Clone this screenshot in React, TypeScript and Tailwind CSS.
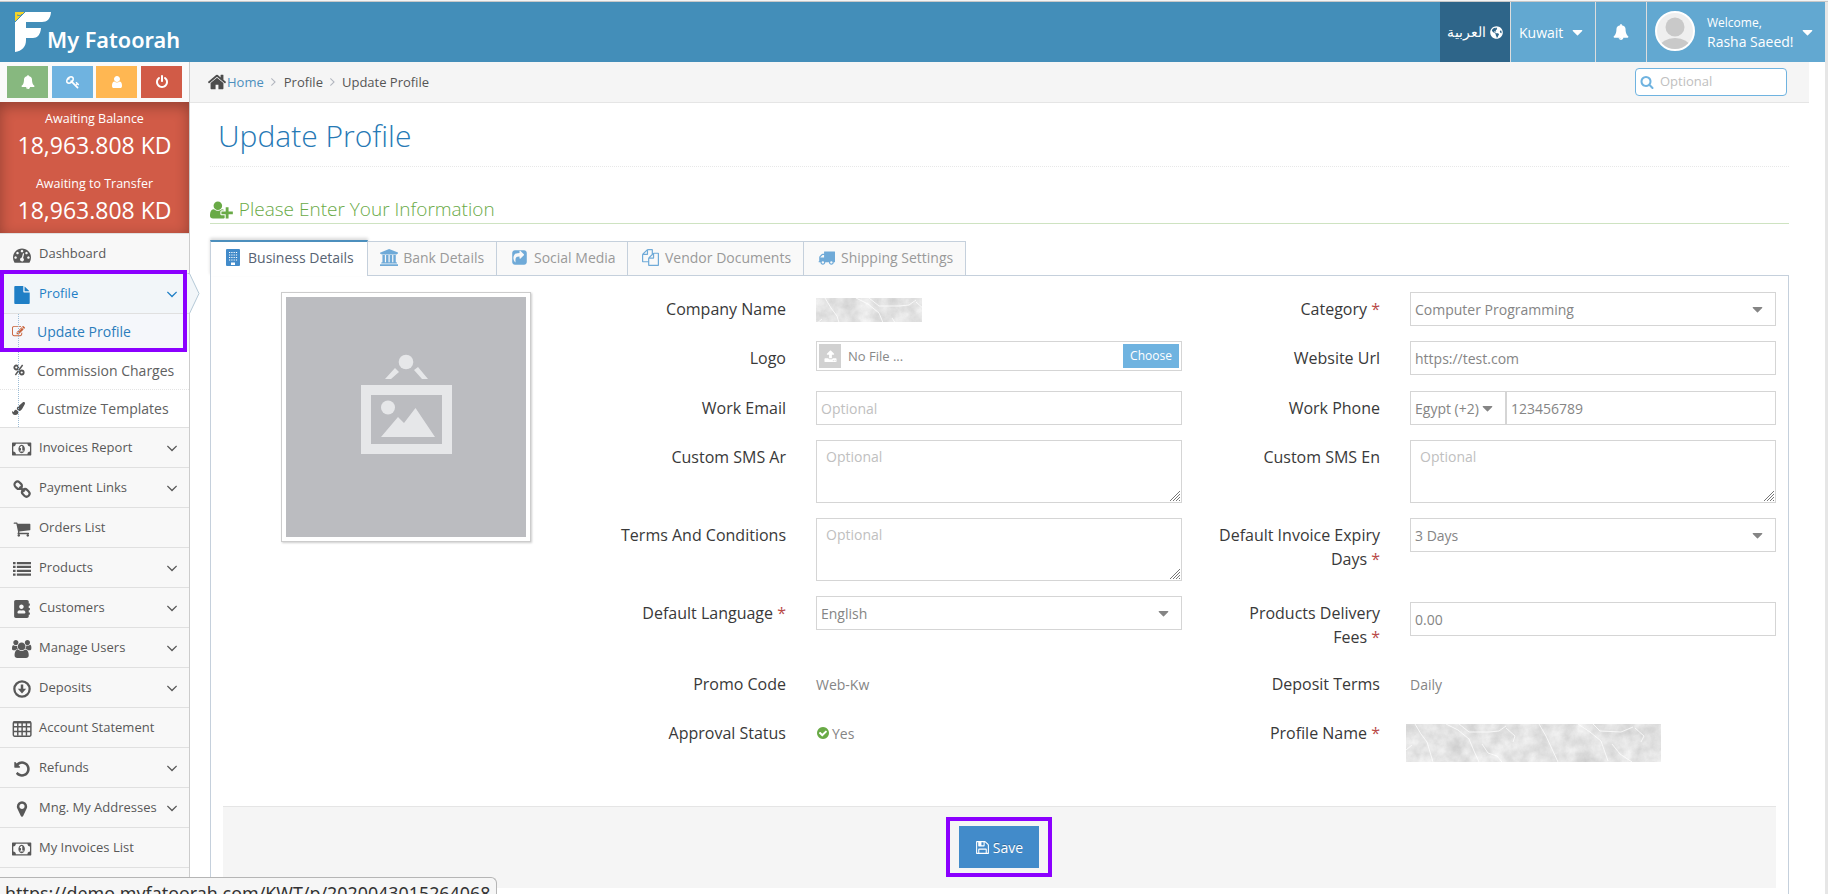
import type { ComponentType, ReactNode } from 'react'
import { FaAddressBook, FaGlobeAmericas, FaPaintBrush } from 'react-icons/fa'

interface IconProps {
  className?: string
}

function makeIcon(d: string, width = 1792) {
  return function Icon({ className }: IconProps) {
    return (
      <svg className={className} viewBox={`0 0 ${width} 1792`} fill="currentColor">
        <path d={d} />
      </svg>
    )
  }
}

const AngleDown = makeIcon('M1395 736q0 13-10 23l-466 466q-10 10-23 10t-23-10l-466-466q-10-10-10-23t10-23l50-50q10-10 23-10t23 10l393 393 393-393q10-10 23-10t23 10l50 50q10 10 10 23z')
const CaretDown = makeIcon('M1408 704q0 26-19 45l-448 448q-19 19-45 19t-45-19l-448-448q-19-19-19-45t19-45 45-19h896q26 0 45 19t19 45z')
const PowerOff = makeIcon('M1664 896q0 156-61 298t-164 245-245 164-298 61-298-61-245-164-164-245-61-298q0-182 80.5-343t226.5-270q43-32 95.5-25t83.5 50q32 42 24.5 94.5t-49.5 84.5q-98 74-151.5 181t-53.5 228q0 104 40.5 198.5t109.5 163.5 163.5 109.5 198.5 40.5 198.5-40.5 163.5-109.5 109.5-163.5 40.5-198.5q0-121-53.5-228t-151.5-181q-42-32-49.5-84.5t24.5-94.5q31-43 84-50t95 25q146 109 226.5 270t80.5 343zm-640-768v640q0 52-38 90t-90 38-90-38-38-90v-640q0-52 38-90t90-38 90 38 38 90z')
const MapMarker = makeIcon('M1152 640q0-106-75-181t-181-75-181 75-75 181 75 181 181 75 181-75 75-181zm256 0q0 109-33 179l-364 774q-16 33-47.5 52t-67.5 19-67.5-19-46.5-52l-365-774q-33-70-33-179 0-212 150-362t362-150 362 150 150 362z')
const Undo = makeIcon('M1664 896q0 156-61 298t-164 245-245 164-298 61q-172 0-327-72.5t-264-204.5q-7-10-6.5-22.5t8.5-20.5l137-138q10-9 25-9 16 2 23 12 73 95 179 147t225 52q104 0 198.5-40.5t163.5-109.5 109.5-163.5 40.5-198.5-40.5-198.5-109.5-163.5-163.5-109.5-198.5-40.5q-98 0-188 35.5t-160 101.5l137 138q31 30 14 69-17 40-59 40h-448q-26 0-45-19t-19-45v-448q0-42 40-59 39-17 69 14l130 129q107-101 244.5-156.5t284.5-55.5q156 0 298 61t245 164 164 245 61 298z')
const Money = makeIcon('M768 1152h384v-96h-128v-448h-114l-148 137 77 80q42-37 55-57h2v288h-128v96zm512-256q0 70-21 142t-59.5 134-101.5 101-138 39-138-39-101.5-101-59.5-134-21-142 21-142 59.5-134 101.5-101 138-39 138 39 101.5 101 59.5 134 21 142zm512 256v-512q-106 0-181-75t-75-181h-1152q0 106-75 181t-181 75v512q106 0 181 75t75 181h1152q0-106 75-181t181-75zm128-832v1152q0 26-19 45t-45 19h-1792q-26 0-45-19t-19-45v-1152q0-26 19-45t45-19h1792q26 0 45 19t19 45z', 1920)
const Home = makeIcon('M1472 992v480q0 26-19 45t-45 19h-384v-384h-256v384h-384q-26 0-45-19t-19-45v-480q0-1 .5-3t.5-3l575-474 575 474q1 2 1 6zm223-69l-62 74q-8 9-21 11h-3q-13 0-21-7l-692-577-692 577q-12 8-24 7-13-2-21-11l-62-74q-8-10-7-23.5t11-21.5l719-599q32-26 76-26t76 26l244 204v-195q0-14 9-23t23-9h192q14 0 23 9t9 23v408l219 182q10 8 11 21.5t-7 23.5z')
const Dashboard = makeIcon('M384 1152q0-53-37.5-90.5t-90.5-37.5-90.5 37.5-37.5 90.5 37.5 90.5 90.5 37.5 90.5-37.5 37.5-90.5zm192-448q0-53-37.5-90.5t-90.5-37.5-90.5 37.5-37.5 90.5 37.5 90.5 90.5 37.5 90.5-37.5 37.5-90.5zm428 481l101-382q6-26-7.5-48.5t-38.5-29.5-48 6.5-30 39.5l-101 382q-60 5-107 43.5t-63 98.5q-20 77 20 146t117 89 146-20 89-117q16-60-6-117t-72-91zm660-33q0-53-37.5-90.5t-90.5-37.5-90.5 37.5-37.5 90.5 37.5 90.5 90.5 37.5 90.5-37.5 37.5-90.5zm-640-640q0-53-37.5-90.5t-90.5-37.5-90.5 37.5-37.5 90.5 37.5 90.5 90.5 37.5 90.5-37.5 37.5-90.5zm448 192q0-53-37.5-90.5t-90.5-37.5-90.5 37.5-37.5 90.5 37.5 90.5 90.5 37.5 90.5-37.5 37.5-90.5zm320 448q0 261-141 483-19 29-54 29h-1402q-35 0-54-29-141-221-141-483 0-182 71-348t191-286 286-191 348-71 348 71 286 191 191 286 71 348z')
const Edit = makeIcon('M888 1184l116-116-152-152-116 116v56h96v96h56zm440-720q-16-16-33 1l-350 350q-17 17-1 33t33-1l350-350q17-17 1-33zm80 594v190q0 119-84.5 203.5t-203.5 84.5h-832q-119 0-203.5-84.5t-84.5-203.5v-832q0-119 84.5-203.5t203.5-84.5h832q63 0 117 25 15 7 18 23 3 17-9 29l-49 49q-14 14-32 8-23-6-45-6h-832q-66 0-113 47t-47 113v832q0 66 47 113t113 47h832q66 0 113-47t47-113v-126q0-13 9-22l64-64q15-15 35-7t20 29zm-96-738l288 288-672 672h-288v-288zm444 132l-92 92-288-288 92-92q28-28 68-28t68 28l152 152q28 28 28 68t-28 68z')
const Save = makeIcon('M512 1536h768v-384h-768v384zm896 0h128v-896q0-14-10-38.5t-20-34.5l-281-281q-10-10-34-20t-39-10v416q0 40-28 68t-68 28h-576q-40 0-68-28t-28-68v-416h-128v1280h128v-416q0-40 28-68t68-28h832q40 0 68 28t28 68v416zm-384-928v-320q0-13-9.5-22.5t-22.5-9.5h-192q-13 0-22.5 9.5t-9.5 22.5v320q0 13 9.5 22.5t22.5 9.5h192q13 0 22.5-9.5t9.5-22.5zm640 32v928q0 40-28 68t-68 28h-1344q-40 0-68-28t-28-68v-1344q0-40 28-68t68-28h928q40 0 88 20t76 48l280 280q28 28 48 76t20 88z')
const Files = makeIcon('M1696 384q40 0 68 28t28 68v1216q0 40-28 68t-68 28h-960q-40 0-68-28t-28-68v-288h-544q-40 0-68-28t-28-68v-672q0-40 20-88t48-76l408-408q28-28 76-48t88-20h416q40 0 68 28t28 68v328q68-40 128-40h416zm-544 213l-299 299h299v-299zm-640-384l-299 299h299v-299zm196 647l316-316v-416h-384v416q0 40-28 68t-68 28h-416v640h512v-256q0-40 20-88t48-76zm956 804v-1152h-384v416q0 40-28 68t-68 28h-416v640h896z')
const ShareSquare = makeIcon('M1005 1005l352-352q19-19 19-45t-19-45l-352-352q-30-31-69-14-40 17-40 59v160q-119 0-216 19.5t-162.5 51-114 79-76.5 95.5-44.5 109-21.5 111.5-5 110.5q0 181 167 404 11 12 25 12 7 0 13-3 22-9 19-33-44-354 62-473 46-52 130-75.5t224-23.5v160q0 42 40 59 12 5 24 5 26 0 45-19zm659-589v960q0 119-84.5 203.5t-203.5 84.5h-960q-119 0-203.5-84.5t-84.5-203.5v-960q0-119 84.5-203.5t203.5-84.5h960q119 0 203.5 84.5t84.5 203.5z')
const Truck = makeIcon('M640 1408q0-52-38-90t-90-38-90 38-38 90 38 90 90 38 90-38 38-90zm-384-512h384v-256h-158q-13 0-22 9l-195 195q-9 9-9 22v30zm1280 512q0-52-38-90t-90-38-90 38-38 90 38 90 90 38 90-38 38-90zm256-1088v1024q0 15-4 26.5t-13.5 18.5-16.5 11.5-23.5 6-22.5 2-25.5 0-22.5-.5q0 106-75 181t-181 75-181-75-75-181h-384q0 106-75 181t-181 75-181-75-75-181h-64q-3 0-22.5.5t-25.5 0-22.5-2-23.5-6-16.5-11.5-13.5-18.5-4-26.5q0-26 19-45t45-19v-320q0-8-.5-35t0-38 2.5-34.5 6.5-37 14-30.5 22.5-30l198-198q19-19 50.5-32t58.5-13h160v-192q0-26 19-45t45-19h1024q26 0 45 19t19 45z')
const Upload = makeIcon('M1344 1472q0-26-19-45t-45-19-45 19-19 45 19 45 45 19 45-19 19-45zm256 0q0-26-19-45t-45-19-45 19-19 45 19 45 45 19 45-19 19-45zm128-224v320q0 40-28 68t-68 28h-1472q-40 0-68-28t-28-68v-320q0-40 28-68t68-28h427q21 56 70.5 92t110.5 36h256q61 0 110.5-36t70.5-92h427q40 0 68 28t28 68zm-325-648q-17 40-59 40h-256v448q0 26-19 45t-45 19h-256q-26 0-45-19t-19-45v-448h-256q-42 0-59-40-17-39 14-69l448-448q18-19 45-19t45 19l448 448q31 30 14 69z')
const CheckCircle = makeIcon('M1412 734q0-28-18-46l-91-90q-19-19-45-19t-45 19l-408 407-226-226q-19-19-45-19t-45 19l-91 90q-18 18-18 46 0 27 18 45l362 362q19 19 45 19 27 0 46-19l543-543q18-18 18-45zm252 162q0 209-103 385.5t-279.5 279.5-385.5 103-385.5-103-279.5-279.5-103-385.5 103-385.5 279.5-279.5 385.5-103 385.5 103 279.5 279.5 103 385.5z')
const Search = makeIcon('M1216 832q0-185-131.5-316.5t-316.5-131.5-316.5 131.5-131.5 316.5 131.5 316.5 316.5 131.5 316.5-131.5 131.5-316.5zm512 832q0 52-38 90t-90 38q-54 0-90-38l-343-342q-179 124-399 124-143 0-273.5-55.5t-225-150-150-225-55.5-273.5 55.5-273.5 150-225 225-150 273.5-55.5 273.5 55.5 225 150 150 225 55.5 273.5q0 220-124 399l343 343q37 37 37 90z')
const Bank = makeIcon('M960 0l960 384v128h-128q0 26-20.5 45t-48.5 19h-1526q-28 0-48.5-19t-20.5-45h-128v-128zm-704 640h256v768h128v-768h256v768h128v-768h256v768h128v-768h256v768h59q28 0 48.5 19t20.5 45v64h-1664v-64q0-26 20.5-45t48.5-19h59v-768zm1595 960q28 0 48.5 19t20.5 45v128h-1920v-128q0-26 20.5-45t48.5-19h1782z', 1920)
const UserPlus = makeIcon('M704 896q-159 0-271.5-112.5t-112.5-271.5 112.5-271.5 271.5-112.5 271.5 112.5 112.5 271.5-112.5 271.5-271.5 112.5zm960 128h352q13 0 22.5 9.5t9.5 22.5v192q0 13-9.5 22.5t-22.5 9.5h-352v352q0 13-9.5 22.5t-22.5 9.5h-192q-13 0-22.5-9.5t-9.5-22.5v-352h-352q-13 0-22.5-9.5t-9.5-22.5v-192q0-13 9.5-22.5t22.5-9.5h352v-352q0-13 9.5-22.5t22.5-9.5h192q13 0 22.5 9.5t9.5 22.5v352zm-736 224q0 52 38 90t90 38h256v238q-68 50-171 50h-874q-121 0-194-69t-73-190q0-53 3.5-103.5t14-109 26.5-108.5 43-97.5 62-81 85.5-53.5 111.5-20q19 0 39 17 79 61 154.5 91.5t164.5 30.5 164.5-30.5 154.5-91.5q20-17 39-17 132 0 217 96h-223q-52 0-90 38t-38 90v192z', 2048)
const User = makeIcon('M1536 1399q0 109-62.5 187t-150.5 78h-854q-88 0-150.5-78t-62.5-187q0-85 8.5-160.5t31.5-152 58.5-131 94-89 134.5-34.5q131 128 313 128t313-128q76 0 134.5 34.5t94 89 58.5 131 31.5 152 8.5 160.5zm-256-887q0 159-112.5 271.5t-271.5 112.5-271.5-112.5-112.5-271.5 112.5-271.5 271.5-112.5 271.5 112.5 112.5 271.5z')
const Cart = makeIcon('M704 1536q0 52-38 90t-90 38-90-38-38-90 38-90 90-38 90 38 38 90zm896 0q0 52-38 90t-90 38-90-38-38-90 38-90 90-38 90 38 38 90zm128-1088v512q0 24-16.5 42.5t-40.5 21.5l-1044 122q13 60 13 70 0 16-24 64h920q26 0 45 19t19 45-19 45-45 19h-1024q-26 0-45-19t-19-45q0-11 8-31.5t16-36 21.5-40 15.5-29.5l-177-823h-204q-26 0-45-19t-19-45 19-45 45-19h256q16 0 28.5 6.5t19.5 15.5 13 24.5 8 26 5.5 29.5 4.5 26h1201q26 0 45 19t19 45z')
const Bell = makeIcon('M912 1696q0-16-16-16-59 0-101.5-42.5t-42.5-101.5q0-16-16-16t-16 16q0 73 51.5 124.5t124.5 51.5q16 0 16-16zm816-288q0 52-38 90t-90 38h-448q0 106-75 181t-181 75-181-75-75-181h-448q-52 0-90-38t-38-90q50-42 91-88t85-119.5 74.5-158.5 50-206 19.5-260q0-152 117-282.5t307-158.5q-8-19-8-39 0-40 28-68t68-28 68 28 28 68q0 20-8 39 190 28 307 158.5t117 282.5q0 139 19.5 260t50 206 74.5 158.5 85 119.5 91 88z')
const Key = makeIcon('M832 512q0-80-56-136t-136-56-136 56-56 136q0 42 19 83-41-19-83-19-80 0-136 56t-56 136 56 136 136 56 136-56 56-136q0-42-19-83 41 19 83 19 80 0 136-56t56-136zm851 704q0 17-49 66t-66 49q-9 0-28.5-16t-36.5-33-38.5-40-24.5-26l-96 96 220 220q28 28 28 68 0 42-39 81t-81 39q-40 0-68-28l-671-671q-176 131-365 131-163 0-265.5-102.5t-102.5-265.5q0-160 95-313t248-248 313-95q163 0 265.5 102.5t102.5 265.5q0 189-131 365l355 355 96-96q-3-3-26-24.5t-40-38.5-33-36.5-16-28.5q0-17 49-66t66-49q13 0 23 10 6 6 46 44.5t82 79.5 86.5 86 73 78 28.5 41z')
const FileIcon = makeIcon('M1152 512v-472q22 14 36 28l408 408q14 14 28 36h-472zm-128 32q0 40 28 68t68 28h544v1056q0 40-28 68t-68 28h-1344q-40 0-68-28t-28-68v-1600q0-40 28-68t68-28h800v544z')
const Users = makeIcon('M593 896q-162 5-265 128h-134q-82 0-138-40.5t-56-118.5q0-353 124-353 6 0 43.5 21t97.5 42.5 119 21.5q67 0 133-23-5 37-5 66 0 159 93 291zm1071 637q0 120-73 189.5t-194 69.5h-874q-121 0-194-69.5t-73-189.5q0-53 3.5-103.5t14-109 26.5-108.5 43-97.5 62-81 85.5-53.5 111.5-20q10 0 43 21.5t73 48 107 48 135 21.5 135-21.5 107-48 73-48 43-21.5q61 0 111.5 20t85.5 53.5 62 81 43 97.5 26.5 108.5 14 109 3.5 103.5zm-1024-1277q0 106-75 181t-181 75-181-75-75-181 75-181 181-75 181 75 75 181zm704 384q0 159-112.5 271.5t-271.5 112.5-271.5-112.5-112.5-271.5 112.5-271.5 271.5-112.5 271.5 112.5 112.5 271.5zm576 225q0 78-56 118.5t-138 40.5h-134q-103-123-265-128 93-132 93-291 0-29-5-66 66 23 133 23 59 0 119-21.5t97.5-42.5 43.5-21q124 0 124 353zm-128-609q0 106-75 181t-181 75-181-75-75-181 75-181 181-75 181 75 75 181z', 1920)
const List = makeIcon('M0 192h256v224h-256zM384 192h1408v224h-1408zM0 576h256v224h-256zM384 576h1408v224h-1408zM0 960h256v224h-256zM384 960h1408v224h-1408zM0 1344h256v224h-256zM384 1344h1408v224h-1408z')

function LinkIcon({ className }: IconProps) {
  return (
    <svg className={className} viewBox="0 0 18 18" fill="none" stroke="currentColor" strokeWidth="2.2">
      <rect x="1.2" y="2.3" width="8" height="6" rx="3" transform="rotate(45 5.2 5.3)" />
      <rect x="8.8" y="9.9" width="8" height="6" rx="3" transform="rotate(45 12.8 12.9)" />
      <path d="M6.5 6.6l5 5" />
    </svg>
  )
}

function DownCircle({ className }: IconProps) {
  return (
    <svg className={className} viewBox="0 0 16 16" fill="none" stroke="currentColor">
      <circle cx="8" cy="8" r="6.8" strokeWidth="2" />
      <path d="M8 4v5" strokeWidth="2.2" />
      <path d="M4.3 7.8h7.4L8 12z" fill="currentColor" stroke="none" />
    </svg>
  )
}

function TableIcon({ className }: IconProps) {
  return (
    <svg className={className} viewBox="0 0 18 16" fill="none" stroke="currentColor" strokeWidth="1.3">
      <rect x="1.2" y="1.7" width="15.8" height="12.8" rx="1" />
      <path d="M1.2 2h15.8" strokeWidth="2" />
      <path d="M1.2 6h15.8M1.2 10.2h15.8M5.2 2v12M9.1 2v12M13 2v12" />
    </svg>
  )
}

function Percent({ className }: IconProps) {
  return (
    <svg className={className} viewBox="0 0 12 12" fill="none" stroke="currentColor">
      <circle cx="3.3" cy="3.5" r="2" strokeWidth="1.8" />
      <circle cx="8.7" cy="8.5" r="2" strokeWidth="1.8" />
      <path d="M9.6 1L2.4 11" strokeWidth="1.4" />
    </svg>
  )
}

function Building({ className }: IconProps) {
  return (
    <svg className={className} viewBox="0 0 14 17" fill="none">
      <rect width="14" height="17" rx="1" fill="currentColor" />
      <path d="M3 3.5h9M3 6h9M3 8.5h9M3 11h9" stroke="#fff" strokeWidth="1.2" strokeDasharray="1.2 1.1" />
      <path d="M5 13.5h4V16H5z" fill="#fff" />
    </svg>
  )
}

interface MenuEntry {
  label: string
  icon: ComponentType<IconProps>
  arrow?: boolean
}

const menu: MenuEntry[] = [
  { label: 'Invoices Report', icon: Money, arrow: true },
  { label: 'Payment Links', icon: LinkIcon, arrow: true },
  { label: 'Orders List', icon: Cart },
  { label: 'Products', icon: List, arrow: true },
  { label: 'Customers', icon: FaAddressBook, arrow: true },
  { label: 'Manage Users', icon: Users, arrow: true },
  { label: 'Deposits', icon: DownCircle, arrow: true },
  { label: 'Account Statement', icon: TableIcon },
  { label: 'Refunds', icon: Undo, arrow: true },
  { label: 'Mng. My Addresses', icon: MapMarker, arrow: true },
  { label: 'My Invoices List', icon: Money },
]

function MenuItem({ label, icon: Icon, arrow }: MenuEntry) {
  return (
    <li className="flex h-10 items-center border-t border-[#e0e0e0] bg-[#f8f8f8] text-[13px] text-[#585858]">
      <span className="mt-0.5 ml-3 flex w-5 justify-center">
        <Icon className="h-[18px] w-auto max-w-5" />
      </span>
      <span className="ml-[7px] flex-1">{label}</span>
      {arrow && <AngleDown className="mr-2 h-[18px] w-[18px]" />}
    </li>
  )
}

function Sidebar() {
  return (
    <aside className="relative w-[190px] shrink-0 border-r border-[#ccc] bg-[#f2f2f2]">
      <div className="flex h-10 items-center bg-[#fafafa] pl-[7px] text-white">
        <button className="flex h-8 w-[41px] items-center justify-center bg-[#87b87f]"><Bell className="h-[14px]" /></button>
        <button className="ml-1 flex h-8 w-[41px] items-center justify-center bg-[#6fb3e0]"><Key className="h-[14px]" /></button>
        <button className="ml-[3px] flex h-8 w-[41px] items-center justify-center bg-[#ffb752]"><User className="h-[14px]" /></button>
        <button className="ml-1 flex h-8 w-[41px] items-center justify-center bg-[#d15b47]"><PowerOff className="h-[14px]" /></button>
      </div>
      <div className="flex h-[131px] flex-col items-center bg-[#d15b47] pt-2 text-white shadow-[inset_0_4px_14px_rgba(0,0,0,0.3)]">
        <span className="text-[12.5px] leading-[18px]">Awaiting Balance</span>
        <span className="mt-0.5 text-[23px] leading-[30px]">18,963.808 KD</span>
        <span className="mt-[15px] text-[12.5px] leading-[18px]">Awaiting to Transfer</span>
        <span className="mt-0.5 text-[23px] leading-[30px]">18,963.808 KD</span>
      </div>
      <ul>
        <MenuItem label="Dashboard" icon={Dashboard} />
        <li className="relative flex h-10 items-center border-t border-[#e0e0e0] bg-[#f2f6f9] text-[13px] font-medium text-[#1f7fc6]">
          <span className="mt-0.5 ml-3 flex w-5 justify-center"><FileIcon className="h-[18px]" /></span>
          <span className="ml-[7px] flex-1">Profile</span>
          <AngleDown className="mr-2 h-[18px] w-[18px]" />
          <svg className="absolute -top-px left-[188px] h-[41px] w-3" viewBox="0 0 12 41">
            <path d="M0 .5h1.5L11 20.500 1.500 40.500H0" fill="#f2f6f9" stroke="#b4c8d6" />
          </svg>
        </li>
        <li>
          <ul className="relative h-[114px] border-t border-[#e0e0e0] bg-white text-[14px] text-[#616161]">
            <li className="flex h-[37px] items-center bg-[#f5f7fb] pb-0.5 pl-3 text-[#2b7dbc]">
              <Edit className="relative h-[13px] w-[13px] text-[#c86139]" />
              <span className="ml-3">Update Profile</span>
            </li>
            <li className="flex h-[38px] items-center pl-3">
              <Percent className="relative ml-px h-3 w-3 text-[#555]" />
              <span className="ml-3">Commission Charges</span>
            </li>
            <li className="flex h-[38px] items-center border-t border-dotted border-[#e4e4e4] pl-3">
              <FaPaintBrush className="relative h-[13px] w-[13px] text-[#555]" />
              <span className="ml-3">Custmize Templates</span>
            </li>
            <li className="absolute top-0 left-[18px] h-full border-l border-dotted border-[#9dbdd6]" />
          </ul>
        </li>
        {menu.map((item) => <MenuItem key={item.label} {...item} />)}
        <li className="h-10 border-t border-[#e0e0e0] bg-[#f8f8f8]" />
      </ul>
      <div className="absolute top-[208px] left-0 h-[82px] w-[187px] border-4 border-[#8b00ff]" />
    </aside>
  )
}

function Header() {
  return (
    <header className="mr-[3px] flex h-[60px] bg-[#438eb9] text-white">
      <div className="relative flex-1">
        <svg className="absolute top-[10px] left-[15px] h-10 w-9" viewBox="0 0 36 40">
          <path d="M0 0h36C35.500 7 32 10 27 10H11v6h15C25.500 23 22 26 18 26h-7v2C11 35 7 39 0 40z" fill="#fff" />
          <path d="M0 0h10L0 10z" fill="#f5d327" />
          <path d="M10 0L0 10M2 3l4 1 1-2" stroke="#438eb9" fill="none" />
        </svg>
        <span className="absolute top-[22px] left-[47px] font-['Noto_Sans'] text-[21.7px] leading-[32px] font-semibold">My Fatoorah</span>
      </div>
      <div className="flex w-[70px] items-center justify-center gap-1 bg-[#2e6589] text-[13.5px]">
        <span dir="rtl">العربية</span>
        <FaGlobeAmericas className="h-[13px] w-[13px]" />
      </div>
      <div className="flex w-[85px] items-center border-l border-[#ddd] bg-[#62a8d1] pl-[8px] text-[14px]">
        Kuwait<CaretDown className="ml-[6px] h-[17px]" />
      </div>
      <div className="flex w-[51px] items-center justify-center border-l border-[#ddd] bg-[#62a8d1]">
        <Bell className="h-4" />
      </div>
      <div className="flex w-[179px] items-center border-l border-[#ddd] bg-[#62a8d1] pl-2">
        <svg className="-mt-0.5 h-10 w-10" viewBox="0 0 40 40">
          <clipPath id="avatar"><circle cx="20" cy="20" r="18" /></clipPath>
          <circle cx="20" cy="20" r="19" fill="#efefef" stroke="#fff" strokeWidth="2" />
          <g clipPath="url(#avatar)" fill="#c9c9c9">
            <circle cx="20" cy="16" r="9.500" />
            <ellipse cx="20" cy="36" rx="15" ry="9" />
          </g>
        </svg>
        <div className="ml-3 w-[87px] pt-0.5 whitespace-nowrap">
          <div className="text-[12px] leading-[18px]">Welcome,</div>
          <div className="text-[14px] leading-5">Rasha Saeed!</div>
        </div>
        <CaretDown className="ml-[5px] h-[17px]" />
      </div>
    </header>
  )
}

// Grey marble swatch that hides a private value
function Marble({ className, seed }: { className: string; seed: number }) {
  return (
    <svg className={className}>
      <filter id={`marble-${seed}`} x="0" y="0" width="100%" height="100%" colorInterpolationFilters="sRGB">
        <feTurbulence type="fractalNoise" baseFrequency="0.07 0.07" numOctaves="5" seed={seed} />
        <feColorMatrix values="0.2 0 0 0 0.79  0.2 0 0 0 0.79  0.2 0 0 0 0.79  0 0 0 0 1" />
      </filter>
      <rect width="100%" height="100%" filter={`url(#marble-${seed})`} />
      <path
        d="M9 0l6 10 6 8 6 20M40 0l12 6 11 9 5 12 5 11M53 0l10 8 20 0 10-1 7-5M100 4l9 8-2 6M133 0l7 12 12 26M172 0l12 8 11 9 7 20M187 0l7 7 21 1 12-5M229 4l9 8-3 6M76 20l6 9 9 3 5 6M206 20l8 10 12 8M0 26l6-5"
        stroke="#fff"
        strokeOpacity=".75"
        strokeLinejoin="round"
        fill="none"
      />
    </svg>
  )
}

function Label({ children, required }: { children: ReactNode; required?: boolean }) {
  return (
    <label className="pt-[5px] pr-[30px] pl-[34px] text-right text-[16px] leading-6 text-[#393939]">
      {children}
      {required && <span className="text-[#b94a48]"> *</span>}
    </label>
  )
}

function Input({ value, placeholder }: { value?: string; placeholder?: string }) {
  return (
    <input
      className="h-[34px] w-full border border-[#d5d5d5] bg-white px-1 text-[14px] text-[#858585] placeholder:text-[#c0c0c0]"
      defaultValue={value}
      placeholder={placeholder}
    />
  )
}

function Select({ value }: { value: string }) {
  return (
    <div className="flex h-[34px] items-center justify-between border border-[#d5d5d5] pr-[9px] pl-1 text-[14px] text-[#858585]">
      {value}
      <CaretDown className="h-[17px]" />
    </div>
  )
}

function TextArea() {
  return (
    <div className="relative h-[63px]">
      <textarea
        className="block h-[63px] w-full resize-none border border-[#d5d5d5] px-[9px] py-[5px] text-[14px] leading-[21px] placeholder:text-[#c0c0c0]"
        placeholder="Optional"
      />
      <svg className="absolute right-0.5 bottom-0.5 h-[10px] w-[10px]" viewBox="0 0 10 10" stroke="#777">
        <path d="M0 10L10 0M3 10l7-7M6 10l4-4M9 10l1-1" />
      </svg>
    </div>
  )
}

const tabs = [
  { label: 'Bank Details', icon: Bank, box: 'w-[129px] pl-3', gap: 'ml-[5px]' },
  { label: 'Social Media', icon: ShareSquare, box: 'w-[131px] pl-[14px]', gap: 'ml-[6px]' },
  { label: 'Vendor Documents', icon: Files, box: 'w-[176px] pl-[14px]', gap: 'ml-[6px]' },
  { label: 'Shipping Settings', icon: Truck, box: 'w-[162px] pl-[14px]', gap: 'ml-[6px]' },
]

function Tabs() {
  return (
    <div className="relative z-10 -mb-px flex h-9 items-end">
      <div className="flex h-9 w-[158px] items-center border-x border-t-2 border-[#c5d0dc] border-t-[#4c8fbd] bg-white pb-[3px] pl-[15px] text-[14px] text-[#576373] shadow-[0_-2px_3px_rgba(0,0,0,0.15)]">
        <Building className="h-[17px] w-[14px] text-[#428bca]" />
        <span className="ml-2">Business Details</span>
      </div>
      {tabs.map(({ label, icon: Icon, box, gap }) => (
        <div key={label} className={`flex h-[35px] items-center border-y border-r border-[#c5d0dc] bg-[#f9f9f9] pb-0.5 text-[14px] text-[#999] ${box}`}>
          <Icon className="h-[17px] text-[#6faad8]" />
          <span className={`whitespace-nowrap ${gap}`}>{label}</span>
        </div>
      ))}
    </div>
  )
}

function Placeholder() {
  return (
    <div className="mt-4 ml-[58px] h-[250px] w-[250px] shrink-0 border border-[#ccc] p-1 shadow-[1px_1px_2px_rgba(0,0,0,0.2)]">
      <svg className="h-full w-full bg-[#bbbcc0]" viewBox="0 0 240 240" fill="#e6e7e9">
        <circle cx="120" cy="65" r="7.300" />
        <path d="M99 82l10-11 4 4-8 7zM128 73l4-3 10 12h-6z" />
        <path d="M75 88h91v69H75zM85 98v49h71V98z" fillRule="evenodd" />
        <circle cx="102" cy="110.500" r="7" />
        <path d="M95 140l17-20 6 6 11.500-15L149 140z" />
      </svg>
    </div>
  )
}

function Form() {
  return (
    <div className="mt-4 ml-[53px] grid grid-cols-[232px_366px_228px_366px] grid-rows-[49px_50px_49px_78px_78px_71px_49px_90px] text-[14px] text-[#858585]">
      <Label>Company Name</Label>
      <div><Marble className="mt-1.5 h-6 w-[106px]" seed={4} /></div>
      <Label required>Category</Label>
      <Select value="Computer Programming" />

      <Label>Logo</Label>
      <div className="flex h-[30px] items-center border border-[#d5d5d5] px-0.5 text-[13px] text-[#888]">
        <span className="flex h-6 w-[22px] items-center justify-center bg-[#d1d1d1] text-white"><Upload className="h-[13px]" /></span>
        <span className="ml-[7px] flex-1 pt-px">No File ...</span>
        <span className="flex h-6 w-14 items-center justify-center bg-[#6fb3e0] text-[12px] text-white">Choose</span>
      </div>
      <Label>Website Url</Label>
      <Input value="https://test.com" />

      <Label>Work Email</Label>
      <Input placeholder="Optional" />
      <Label>Work Phone</Label>
      <div className="flex">
        <div className="flex h-[34px] w-24 shrink-0 items-center border border-[#d5d5d5] pl-1 whitespace-nowrap">
          Egypt (+2)<CaretDown className="h-[17px] w-[17px]" />
        </div>
        <Input value="123456789" />
      </div>

      <Label>Custom SMS Ar</Label>
      <TextArea />
      <Label>Custom SMS En</Label>
      <TextArea />

      <Label>Terms And Conditions</Label>
      <TextArea />
      <Label required>Default Invoice Expiry Days</Label>
      <Select value="3 Days" />

      <Label required>Default Language</Label>
      <Select value="English" />
      <Label required>Products Delivery Fees</Label>
      <div className="pt-1.5"><Input value="0.00" /></div>

      <Label>Promo Code</Label>
      <span className="pt-[7px]">Web-Kw</span>
      <Label>Deposit Terms</Label>
      <span className="pt-[7px]">Daily</span>

      <Label>Approval Status</Label>
      <span className="flex h-[34px] items-center gap-0.5"><CheckCircle className="h-[14px] text-[#69aa46]" />Yes</span>
      <Label required>Profile Name</Label>
      <div><Marble className="mt-2 -ml-1 h-[38px] w-[255px]" seed={9} /></div>
    </div>
  )
}

export default function App() {
  return (
    <div className="relative h-[894px] w-[1828px] overflow-hidden bg-white font-['Open_Sans',sans-serif] text-[13px]">
      <div className="h-0.5 border-b border-[#c8c8c8] bg-[#f4f4f4]" />
      <Header />
      <div className="mr-[3px] flex h-[832px]">
        <Sidebar />
        <main className="flex-1">
          <div className="mr-4 flex h-[41px] items-center border-b border-[#e5e5e5] bg-[#f5f5f5] pl-[17px] text-[13px] text-[#555]">
            <Home className="h-5 w-5 text-[#4c4c4c]" />
            <span className="pt-px text-[#4c8fbd]">Home</span>
            <AngleDown className="mr-1 ml-0.5 h-[14px] w-[14px] -rotate-90 text-[#b2b6bf]" />
            <span className="pt-px">Profile</span>
            <AngleDown className="mr-[3px] ml-0.5 h-[14px] w-[14px] -rotate-90 text-[#b2b6bf]" />
            <span className="pt-px">Update Profile</span>
            <div className="mr-[22px] ml-auto flex h-7 w-[152px] items-center rounded border border-[#6fb3e0] bg-white pl-1 text-[#c0c0c0]">
              <Search className="mr-1.5 h-[14px] text-[#6fb3e0]" />Optional
            </div>
          </div>

          <div className="mr-9 ml-5">
            <h1 className="h-16 border-b border-dotted border-[#e8e8e8] pt-[11px] pl-2 text-[30px] leading-[44px] font-light text-[#2679b5]">Update Profile</h1>
            <h3 className="mt-[29px] mb-4 flex h-7 items-center border-b border-[#cee3c1] text-[19px] font-light text-[#69aa46]">
              <UserPlus className="mr-1.5 h-5" />Please Enter Your Information
            </h3>
            <Tabs />
            <div className="h-[640px] border border-[#c5d0dc] px-3">
              <div className="flex h-[530px]">
                <Placeholder />
                <Form />
              </div>
              <div className="flex h-[82px] justify-center border-t border-[#e5e5e5] bg-[#f5f5f5] pt-[10px] pr-px">
                <div className="h-[60px] w-[106px] border-4 border-[#8b00ff] px-[9px] pt-[5px]">
                  <button className="flex h-[42px] w-20 items-center justify-center gap-[3px] bg-[#428bca] text-[14px] text-white [text-shadow:0_-1px_0_rgba(0,0,0,0.25)]">
                    <Save className="h-[15px]" />Save
                  </button>
                </div>
              </div>
            </div>
          </div>
        </main>
      </div>
      <div className="absolute top-0.5 right-0 h-full w-[3px] bg-[#e6e6e6]" />
      <div className="absolute top-[877px] left-0 z-20 h-8 w-[497px] rounded-tr-md border-t border-r border-[#b5b5b5] bg-[#f6f6f6] pl-[5px] font-['Noto_Sans'] text-[17.85px] leading-[30px] whitespace-nowrap text-[#333]">
        https://demo.myfatoorah.com/KWT/p/2020043015264068
      </div>
    </div>
  )
}
